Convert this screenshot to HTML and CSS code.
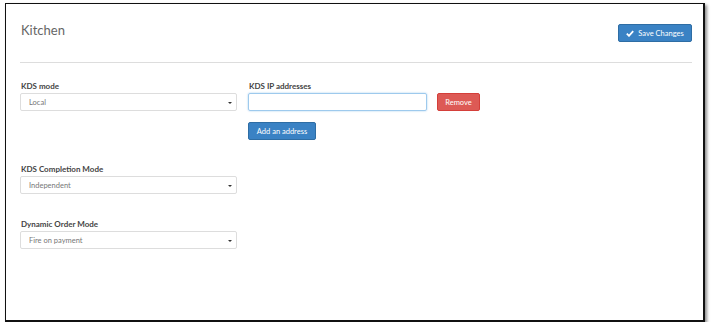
FILE: index.html
```html
<!DOCTYPE html>
<html>
<head>
    <title>Kitchen Settings</title>
    <link rel="stylesheet" href="styles.css">
</head>
<body>

    <div class="frame">
        <div class="header">
            <h1>Kitchen</h1>
            <button class="btn btn-primary btn-save">
                <svg width="8" height="7" viewBox="0 0 8 7"><path d="M0.8 3.6 L3 5.8 L7.2 1.2" fill="none" stroke="#fff" stroke-width="1.8"/></svg>
                Save Changes
            </button>
        </div>

        <hr class="divider">

        <div class="row">
            <div class="col-left">
                <label>KDS mode</label>
                <div class="select">Local<span class="caret"></span></div>
            </div>
            <div class="col-right">
                <label>KDS IP addresses</label>
                <div class="ip-line">
                    <div class="input"></div>
                    <button class="btn btn-danger">Remove</button>
                </div>
                <button class="btn btn-primary btn-add">Add an address</button>
            </div>
        </div>

        <div class="row">
            <div class="col-left">
                <label>KDS Completion Mode</label>
                <div class="select">Independent<span class="caret"></span></div>
            </div>
        </div>

        <div class="row row-last">
            <div class="col-left">
                <label>Dynamic Order Mode</label>
                <div class="select">Fire on payment<span class="caret"></span></div>
            </div>
        </div>
    </div>

</body>
</html>
```

FILE: styles.css
```css
body {
    margin: 0;
    padding: 0;
    background: #fff;
    font-family: Lato, "Liberation Sans", sans-serif;
    color: #333;
}

.frame {
    margin: 3px 0 0 5px;
    width: 672px;
    height: 316px;
    padding: 0 11px 0 14px;
    border: 1px solid #111;
    border-width: 1px 2px 2px 1px;
    box-shadow: 2px 2px 3px rgba(0, 0, 0, 0.45);
    box-sizing: content-box;
}

.header {
    display: flex;
    justify-content: space-between;
    align-items: center;
    padding-top: 20px;
    height: 18px;
}

.header h1 {
    margin: 0;
    font-size: 13px;
    font-weight: normal;
    color: #666;
    position: relative;
    top: -3px;
    padding-left: 1px;
}

.divider {
    border: none;
    border-top: 1px solid #ddd;
    margin: 20px 0 0 0;
    width: 672px;
}

.row {
    display: flex;
    gap: 11px;
    margin-top: 18px;
}

.row + .row {
    margin-top: 24px;
}

.row-last {
    margin-top: 25px !important;
}

.col-left {
    width: 217px;
}

label {
    display: block;
    font-size: 8px;
    font-weight: bold;
    color: #444;
    height: 10px;
    line-height: 10px;
    margin-bottom: 2px;
    padding-left: 1px;
}

.select {
    position: relative;
    height: 18px;
    line-height: 18px;
    border: 1px solid #ddd;
    border-radius: 2px;
    box-sizing: border-box;
    padding-left: 8px;
    font-size: 7.5px;
    color: #777;
}

.caret {
    position: absolute;
    right: 4px;
    top: 8px;
    border-left: 2px solid transparent;
    border-right: 2px solid transparent;
    border-top: 2px solid #333;
}

.ip-line {
    display: flex;
    gap: 10px;
}

.input {
    width: 179px;
    height: 18px;
    box-sizing: border-box;
    border: 1px solid #9ecaed;
    border-radius: 2px;
    box-shadow: 0 0 2px #9ecaed;
}

.btn {
    height: 18px;
    border-radius: 2px;
    font-family: Lato, "Liberation Sans", sans-serif;
    font-size: 7.5px;
    color: #fff;
    padding: 0;
    box-sizing: border-box;
    cursor: pointer;
}

.btn-primary {
    background-color: #3a82c4;
    border: 1px solid #2e6da4;
}

.btn-danger {
    width: 43px;
    background-color: #dd5a55;
    border: 1px solid #d43f3a;
}

.btn-add {
    width: 68px;
    margin-top: 11px;
}

.btn-save {
    width: 74px;
    display: flex;
    align-items: center;
    justify-content: center;
    gap: 4px;
}
```
